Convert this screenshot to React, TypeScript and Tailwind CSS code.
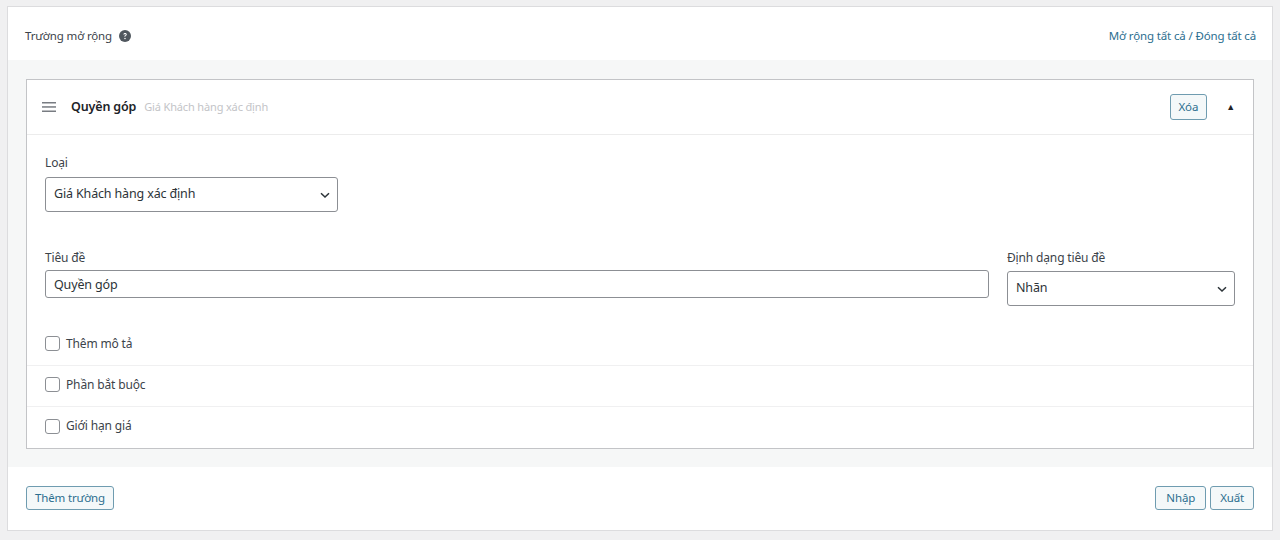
import { useState } from "react";

function HelpIcon() {
  return (
    <svg width="12" height="12" viewBox="0 0 20 20" className="inline-block">
      <circle cx="10" cy="10" r="10" fill="#50575e" />
      <path
        d="M7.2 7.6c0-1.6 1.2-2.7 2.9-2.7 1.7 0 2.9 1 2.9 2.5 0 1.1-.6 1.7-1.5 2.2-.7.4-.9.7-.9 1.3v.4H9v-.5c0-1 .4-1.5 1.2-2 .7-.4 1-.7 1-1.3 0-.6-.5-1-1.1-1-.7 0-1.2.5-1.2 1.1H7.2z"
        fill="#fff"
      />
      <circle cx="10" cy="14.2" r="1.2" fill="#fff" />
    </svg>
  );
}

function Chevron() {
  return (
    <svg width="12" height="12" viewBox="0 0 12 12" className="shrink-0">
      <path d="M2 4.2l4 3.8 4-3.8" fill="none" stroke="#2c3338" strokeWidth="1.5" />
    </svg>
  );
}

function FakeSelect({ value, className }: { value: string; className: string }) {
  return (
    <div
      className={`flex items-center justify-between rounded-[3px] border border-[#8c8f94] bg-white pl-[8px] pr-[6px] text-[12.5px] text-[#2c3338] ${className}`}
    >
      <span>{value}</span>
      <Chevron />
    </div>
  );
}

const options = ["Thêm mô tả", "Phần bắt buộc", "Giới hạn giá"];

const btn =
  "h-[24px] rounded-[3px] border border-[#6f9cb0] bg-[#f4f8f9] px-[8px] text-[11.5px] leading-none text-[#2c6e8f]";

export default function App() {
  const [checked, setChecked] = useState<Record<string, boolean>>({});
  const [title, setTitle] = useState("Quyền góp");

  return (
    <div
      className="min-h-screen bg-[#f0f0f1] px-[7px] pt-[6px] tracking-[-0.15px]"
      style={{ fontFamily: '"Noto Sans", "Open Sans", sans-serif' }}
    >
      <div className="w-[1266px] border border-[#dcdcde] bg-white">
        {/* header */}
        <div className="flex h-[53px] items-center justify-between pl-[17px] pr-[16px] pt-[4px]">
          <div className="flex items-center gap-[7px] text-[11.5px] text-[#3c434a]">
            <span>Trường mở rộng</span>
            <HelpIcon />
          </div>
          <div className="text-[11.5px] text-[#2c6e8f]">
            <span>Mở rộng tất cả</span> / <span>Đóng tất cả</span>
          </div>
        </div>

        {/* fields */}
        <div className="bg-[#f6f7f7] px-[18px] pb-[18px] pt-[19px]">
          <div className="border border-[#c3c4c7] bg-white">
            <div className="flex h-[55px] items-center justify-between border-b border-[#ececec] pl-[15px] pr-[18px]">
              <div className="flex items-center">
                <svg width="14" height="10" viewBox="0 0 14 10" className="mr-[15px]">
                  <rect x="0" y="0" width="14" height="1.5" fill="#787c82" />
                  <rect x="0" y="4.2" width="14" height="1.5" fill="#787c82" />
                  <rect x="0" y="8.5" width="14" height="1.5" fill="#787c82" />
                </svg>
                <span className="text-[12.5px] font-semibold text-[#1d2327]">Quyền góp</span>
                <span className="ml-[8px] text-[11px] text-[#c3c4c7]">Giá Khách hàng xác định</span>
              </div>
              <div className="flex items-center">
                <button className={`${btn} h-[26px]`}>Xóa</button>
                <span className="ml-[19px] text-[9px] text-[#1d2327]">▲</span>
              </div>
            </div>

            <div className="px-[18px] pt-[19px]">
              <div className="mb-[5px] text-[12px] leading-[18px] text-[#3c434a]">Loại</div>
              <FakeSelect value="Giá Khách hàng xác định" className="h-[35px] w-[293px]" />

              <div className="mt-[37px] flex items-start gap-[18px]">
                <div className="flex-1">
                  <div className="mb-[3px] text-[12px] leading-[18px] text-[#3c434a]">Tiêu đề</div>
                  <input
                    value={title}
                    onChange={(e) => setTitle(e.target.value)}
                    className="h-[28px] w-full rounded-[3px] border border-[#8c8f94] px-[8px] text-[12.5px] text-[#2c3338] outline-none"
                  />
                </div>
                <div className="w-[228px]">
                  <div className="mb-[4px] text-[12px] leading-[18px] text-[#3c434a]">Định dạng tiêu đề</div>
                  <FakeSelect value="Nhãn" className="h-[35px] w-full" />
                </div>
              </div>
            </div>

            <div className="mt-[19px]">
              {options.map((opt, i) => (
                <label
                  key={opt}
                  className={`flex h-[41px] items-center gap-[6px] px-[18px] pb-[3px] text-[12px] text-[#3c434a] ${
                    i < options.length - 1 ? "border-b border-[#f0f0f1]" : ""
                  }`}
                >
                  <input
                    type="checkbox"
                    checked={!!checked[opt]}
                    onChange={() => setChecked({ ...checked, [opt]: !checked[opt] })}
                    className="h-[15px] w-[15px] appearance-none rounded-[3px] border border-[#8c8f94] bg-white"
                  />
                  <span>{opt}</span>
                </label>
              ))}
            </div>
          </div>
        </div>

        {/* footer */}
        <div className="flex h-[63px] items-center justify-between px-[18px] pb-[1px]">
          <button className={btn}>Thêm trường</button>
          <div className="flex gap-[4px]">
            <button className={`${btn} px-[10px]`}>Nhập</button>
            <button className={`${btn} px-[9px]`}>Xuất</button>
          </div>
        </div>
      </div>
    </div>
  );
}
